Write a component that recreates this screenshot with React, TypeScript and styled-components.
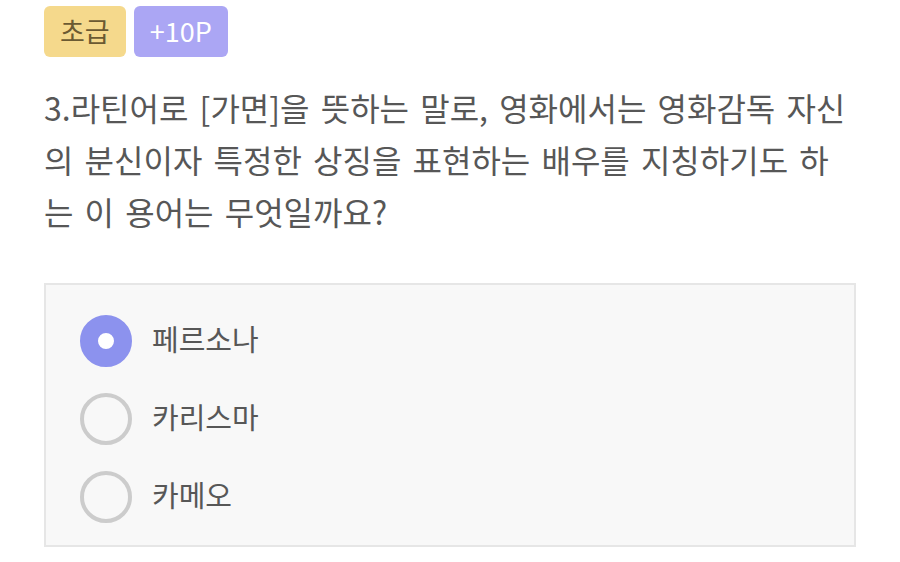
import React from "react";
import styled, { createGlobalStyle } from "styled-components";

const Global = createGlobalStyle`
  html, body { margin: 0; padding: 0; background: #ffffff; }
  body { font-family: "Noto Sans CJK KR", "Noto Sans", sans-serif; }
`;

const Page = styled.div`
  width: 900px;
  height: 562px;
  box-sizing: border-box;
  padding: 6px 44px 0 44px;
  display: flex;
  flex-direction: column;
`;

const Badges = styled.div`
  display: flex;
  gap: 8px;
`;

const Badge = styled.div<{ $bg: string; $fg: string }>`
  height: 51px;
  padding: 0 16px 3px 16px;
  box-sizing: border-box;
  border-radius: 6px;
  background: ${(p) => p.$bg};
  color: ${(p) => p.$fg};
  display: flex;
  align-items: center;
  justify-content: center;
  font-size: 27px;
  font-weight: 400;
`;

const Question = styled.p`
  margin: 24px 0 0 0;
  width: 812px;
  font-size: 32px;
  line-height: 52px;
  word-spacing: 4px;
  color: #575757;
  font-weight: 400;
`;

const OptionsBox = styled.div`
  margin-top: 46px;
  width: 812px;
  height: 264px;
  box-sizing: border-box;
  border: 2px solid #e6e6e6;
  background: #f8f8f8;
  padding: 30px 0 0 34px;
  display: flex;
  flex-direction: column;
  gap: 26px;
`;

const Option = styled.label`
  display: flex;
  align-items: center;
  gap: 20px;
  height: 52px;
  font-size: 29px;
  color: #575757;
`;

const OptionText = styled.span`
  padding-bottom: 6px;
`;

const Radio = styled.span<{ $checked: boolean }>`
  width: 52px;
  height: 52px;
  box-sizing: border-box;
  border-radius: 50%;
  border: ${(p) => (p.$checked ? "18px solid #8c92ee" : "4px solid #cccccc")};
  background: ${(p) => (p.$checked ? "#ffffff" : "transparent")};
  flex-shrink: 0;
`;

const options = ["페르소나", "카리스마", "카메오"];

export default function App() {
  return (
    <Page>
      <Global />
      <Badges>
        <Badge $bg="#f5d98c" $fg="#6b5a32">초급</Badge>
        <Badge $bg="#aba6f4" $fg="#ffffff">+10P</Badge>
      </Badges>
      <Question>
        3.라틴어로 [가면]을 뜻하는 말로, 영화에서는 영화감독 자신의 분신이자 특정한 상징을 표현하는 배우를 지칭하기도 하는 이 용어는 무엇일까요?
      </Question>
      <OptionsBox>
        {options.map((o, i) => (
          <Option key={o}>
            <Radio $checked={i === 0} />
            <OptionText>{o}</OptionText>
          </Option>
        ))}
      </OptionsBox>
    </Page>
  );
}
